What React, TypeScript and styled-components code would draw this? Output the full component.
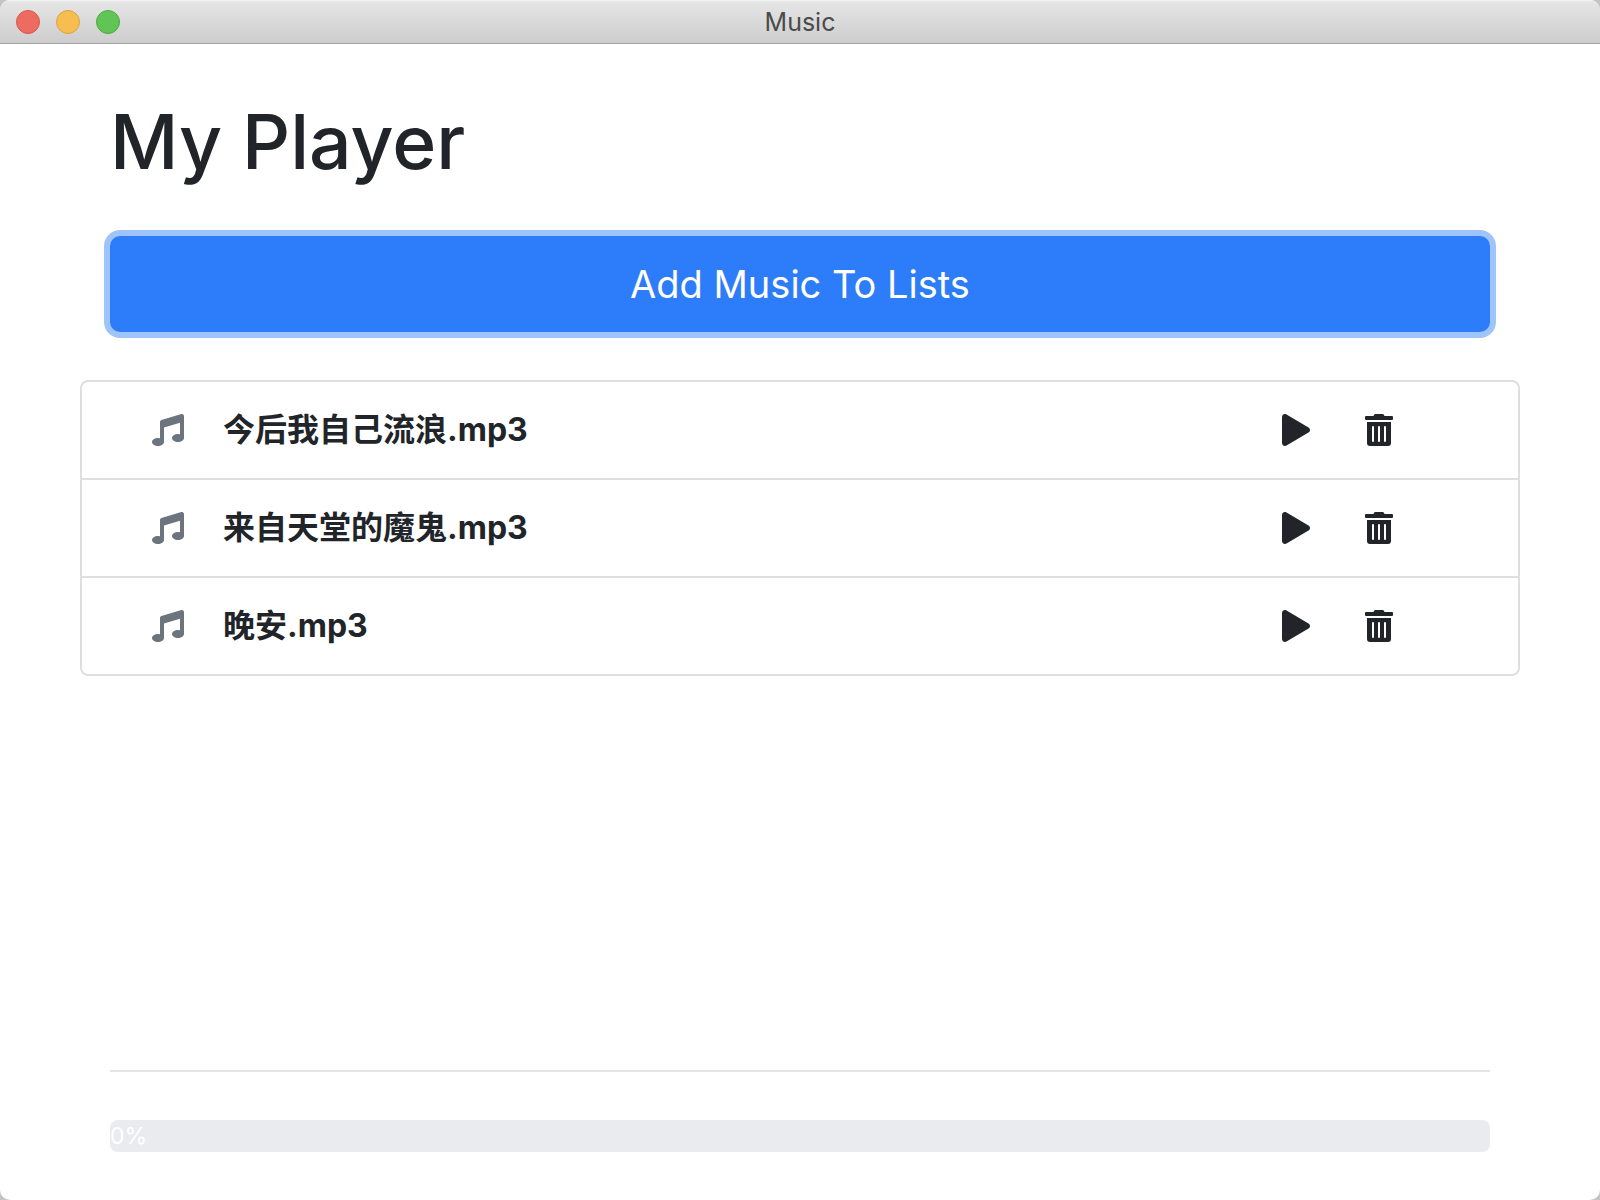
import React from "react";
import styled, { createGlobalStyle } from "styled-components";
import { FaMusic, FaPlay, FaTrashAlt } from "react-icons/fa";

const GlobalStyle = createGlobalStyle`
  *, *::before, *::after { box-sizing: border-box; }
  body {
    margin: 0;
    background: #c4c4c4;
    color: #212529;
    font-family: Inter, "Noto Sans CJK SC", sans-serif;
    font-size: 32px;
    line-height: 48px;
  }
`;

const Window = styled.div`
  display: flex;
  flex-direction: column;
  min-height: 100vh;
  overflow: hidden;
  background: #fff;
  border-radius: 10px;
`;

const TitleBar = styled.header`
  display: grid;
  grid-template-columns: 1fr auto 1fr;
  align-items: center;
  height: 44px;
  padding: 0 16px;
  background: linear-gradient(#e6e6e6, #cdcdcd);
  border-top: 1px solid #f4f4f4;
  border-bottom: 1px solid #a3a3a3;
`;

const Lights = styled.div`
  display: flex;
  gap: 16px;
`;

const Light = styled.button<{ $fill: string; $edge: string }>`
  width: 24px;
  height: 24px;
  padding: 0;
  border: 1px solid ${(p) => p.$edge};
  border-radius: 50%;
  background: ${(p) => p.$fill};
`;

const WindowTitle = styled.span`
  color: #4a4a4a;
  font-size: 25px;
  line-height: 32px;
`;

const Content = styled.main`
  flex: 1;
  display: flex;
  flex-direction: column;
  padding: 48px 80px;
`;

const Heading = styled.h1`
  margin: 0 30px 44px;
  font-size: 75px;
  font-weight: 500;
  line-height: 100px;
`;

const AddButton = styled.button`
  height: 96px;
  margin: 0 30px 48px;
  padding: 0 32px;
  border: 0;
  border-radius: 10px;
  outline: 0;
  background: #2d7cf9;
  box-shadow: 0 0 0 6px #9ec5fb;
  color: #fff;
  font-family: inherit;
  font-size: 38px;
  line-height: 60px;
`;

const TrackList = styled.ul`
  margin: 0;
  padding: 0;
  list-style: none;
  border: 2px solid #dfdfdf;
  border-radius: 8px;
`;

const Track = styled.li`
  display: grid;
  grid-template-columns: 5fr 1fr;
  padding: 24px 40px;

  & + & {
    border-top: 2px solid #dfdfdf;
  }
`;

const TrackName = styled.div`
  display: flex;
  align-items: center;
  gap: 39px;
  padding: 0 30px;

  svg {
    color: #6c757d;
  }
`;

const TrackActions = styled.div`
  display: flex;
  align-items: center;
  gap: 55px;
  padding-left: 30px;
`;

const IconButton = styled.button`
  display: flex;
  padding: 0;
  border: 0;
  background: none;
  color: inherit;
  font-size: 32px;

  svg {
    width: 28px;
    height: 32px;
  }
`;

const Player = styled.footer`
  margin: auto 30px 0;
  padding-top: 48px;
  border-top: 2px solid #e4e4e4;
`;

const Progress = styled.div`
  display: flex;
  height: 32px;
  overflow: hidden;
  border-radius: 8px;
  background: #e9ebef;
  color: #fff;
  font-size: 23px;
  line-height: 32px;
`;

const tracks = ["今后我自己流浪.mp3", "来自天堂的魔鬼.mp3", "晚安.mp3"];

export default function App() {
  const progress = 0;

  return (
    <>
      <GlobalStyle />
      <Window>
        <TitleBar>
          <Lights>
            <Light aria-label="Close" $fill="#ed6b60" $edge="#d8584e" />
            <Light aria-label="Minimize" $fill="#f6be50" $edge="#dca240" />
            <Light aria-label="Zoom" $fill="#61c556" $edge="#4caa3f" />
          </Lights>
          <WindowTitle>Music</WindowTitle>
        </TitleBar>
        <Content>
          <Heading>My Player</Heading>
          <AddButton type="button">Add Music To Lists</AddButton>
          <TrackList>
            {tracks.map((name) => (
              <Track key={name}>
                <TrackName>
                  <FaMusic aria-hidden />
                  <b>{name}</b>
                </TrackName>
                <TrackActions>
                  <IconButton type="button" aria-label={`Play ${name}`}>
                    <FaPlay />
                  </IconButton>
                  <IconButton type="button" aria-label={`Delete ${name}`}>
                    <FaTrashAlt />
                  </IconButton>
                </TrackActions>
              </Track>
            ))}
          </TrackList>
          <Player>
            <Progress
              role="progressbar"
              aria-label="Playback progress"
              aria-valuenow={progress}
              aria-valuemin={0}
              aria-valuemax={100}
            >
              {progress}%
            </Progress>
          </Player>
        </Content>
      </Window>
    </>
  );
}
